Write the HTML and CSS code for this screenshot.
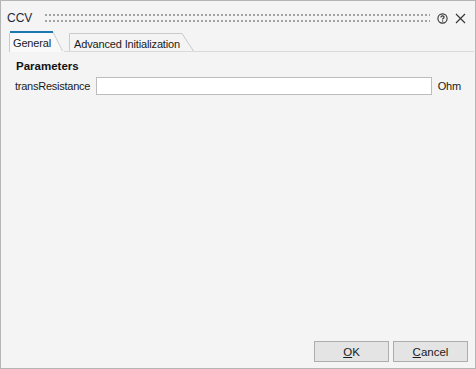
FILE: index.html
```html
<!DOCTYPE html>
<html>
<head>
<meta charset="utf-8">
<link rel="stylesheet" href="styles.css">
</head>
<body>
<div class="window">
  <div class="titlebar">
    <span class="title">CCV</span>
    <div class="grip"></div>
    <svg class="icon-help" width="11" height="11" viewBox="0 0 11 11">
      <circle cx="5.5" cy="5.5" r="4.6" fill="none" stroke="#333" stroke-width="1.1"/>
      <path d="M3.9 4.4 C3.9 3.3 4.6 2.9 5.5 2.9 C6.4 2.9 7.1 3.4 7.1 4.2 C7.1 5.2 5.6 5.3 5.6 6.5" fill="none" stroke="#333" stroke-width="1.1"/>
      <rect x="5" y="7.4" width="1.2" height="1.2" fill="#333"/>
    </svg>
    <svg class="icon-close" width="11" height="11" viewBox="0 0 11 11">
      <path d="M1 1 L10 10 M10 1 L1 10" stroke="#333" stroke-width="1.1" fill="none"/>
    </svg>
  </div>
  <div class="tabbar">
    <div class="tab tab-active">
      <svg class="tab-shape" width="55" height="21" viewBox="0 0 55 21">
        <path d="M0 21 V0 H44 L54 20 V21 Z" fill="#f9f9f9"/>
        <path d="M0.5 21 V2" stroke="#cacaca" fill="none"/>
        <path d="M44 1 L53.5 20" stroke="#cacaca" fill="none"/>
        <rect x="1" y="0" width="43" height="2" fill="#1b79b0"/>
      </svg>
      <span class="tab-label">General</span>
    </div>
    <div class="tab tab-inactive">
      <svg class="tab-shape" width="131" height="21" viewBox="0 0 131 21">
        <path d="M5.5 20 V2.5 H118 L129.5 20" stroke="#cacaca" fill="none"/>
        <path d="M0 20.5 H131" stroke="#dadada" fill="none"/>
      </svg>
      <span class="tab-label">Advanced Initialization</span>
    </div>
    <div class="tab-fill"></div>
  </div>
  <div class="content">
    <div class="section-title">Parameters</div>
    <div class="param-row">
      <label class="param-label">transResistance</label>
      <input class="param-input" type="text" value="">
      <span class="param-unit">Ohm</span>
    </div>
  </div>
  <div class="footer">
    <button class="btn"><u>O</u>K</button>
    <button class="btn"><u>C</u>ancel</button>
  </div>
</div>
</body>
</html>
```

FILE: styles.css
```css
* { box-sizing: border-box; }
html, body { margin: 0; padding: 0; }
body {
  font-family: "Liberation Sans", Arial, sans-serif;
  font-size: 11px;
  color: #1a1a1a;
  background: #f4f4f4;
}
.window {
  width: 476px;
  height: 369px;
  border: 1px solid #b5b5b5;
  background: #f4f4f4;
  display: flex;
  flex-direction: column;
}
.titlebar {
  height: 30px;
  display: flex;
  align-items: center;
  padding: 4px 9px 0 6px;
}
.title {
  font-size: 12px;
  color: #1e2a3a;
  width: 38px;
}
.grip {
  flex: 1;
  height: 8px;
  margin-right: 7px;
  background:
    linear-gradient(90deg, #a3a3a3 0 2px, transparent 2px) 0 0 / 4px 2px repeat-x,
    linear-gradient(90deg, #a3a3a3 0 2px, transparent 2px) 0 6px / 4px 2px repeat-x;
}
.icon-help { display: block; margin-right: 7px; }
.icon-close { display: block; }
.tabbar {
  height: 21px;
  display: flex;
  padding-left: 8px;
  padding-right: 1px;
}
.tab {
  position: relative;
  height: 21px;
  display: flex;
  align-items: center;
}
.tab-shape {
  position: absolute;
  left: 0;
  top: 0;
  display: block;
}
.tab-label {
  position: relative;
  font-size: 11px;
  letter-spacing: -0.15px;
  color: #1a1a1a;
  padding-top: 3px;
}
.tab-active { width: 55px; padding-left: 4px; }
.tab-inactive { width: 131px; padding-left: 10px; }
.tab-inactive .tab-label { padding-top: 4px; }
.tab-fill {
  flex: 1;
  border-bottom: 1px solid #dadada;
}
.content {
  flex: 1;
  padding: 7px 14px 0 14px;
}
.section-title {
  font-weight: bold;
  font-size: 11.5px;
  line-height: 14px;
  margin-left: 1px;
  color: #111;
}
.param-row {
  display: flex;
  align-items: center;
  margin-top: 4px;
}
.param-label {
  width: 81px;
  font-size: 11px;
  letter-spacing: -0.25px;
  color: #1a1a1a;
}
.param-input {
  width: 336px;
  height: 18px;
  border: 1px solid #bcbcbc;
  background: #fff;
  margin: 0;
  padding: 0 3px;
  font: inherit;
  outline: none;
}
.param-unit {
  margin-left: 6px;
  font-size: 11px;
  letter-spacing: -0.2px;
  color: #1a1a1a;
}
.footer {
  display: flex;
  justify-content: flex-end;
  gap: 4px;
  padding: 0 7px 6px 0;
}
.btn {
  width: 75px;
  height: 21px;
  border: 1px solid #adadad;
  background: #e4e4e4;
  font-family: "Liberation Sans", Arial, sans-serif;
  font-size: 11.5px;
  color: #1a1a1a;
  padding: 0;
  margin: 0;
}
```
